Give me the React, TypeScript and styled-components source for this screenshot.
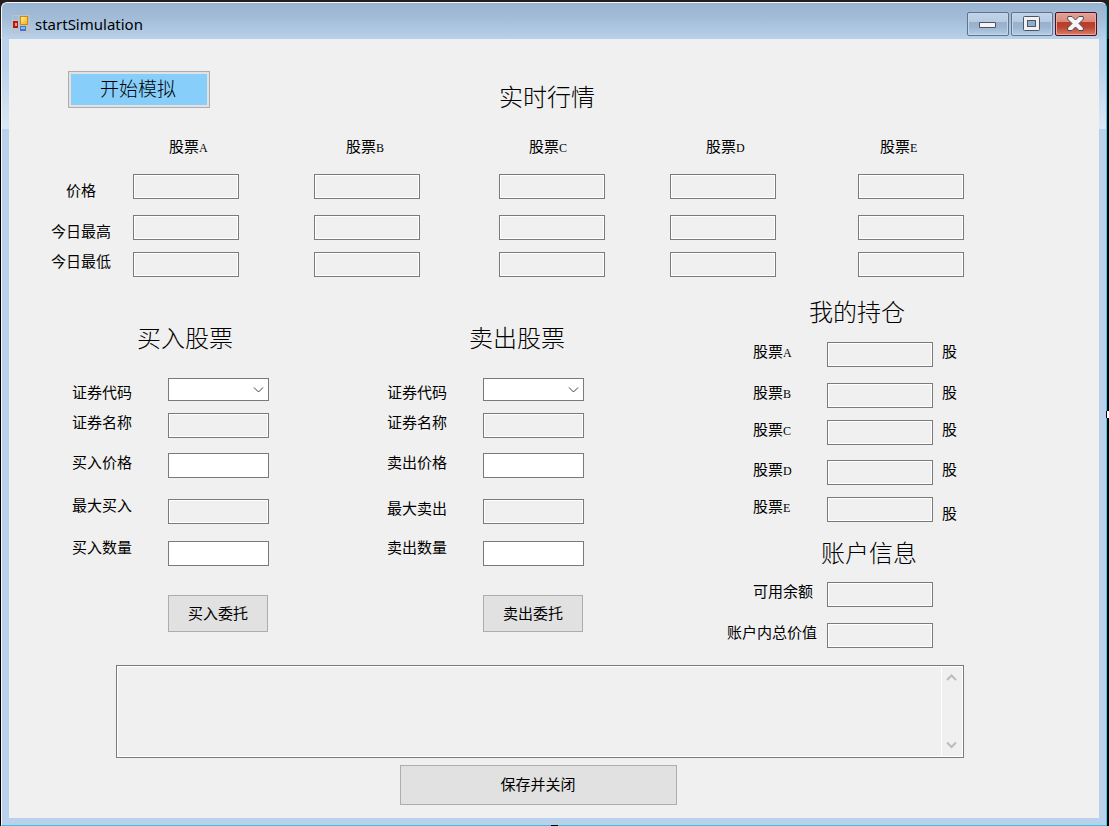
import React from "react";
import styled, { createGlobalStyle, css } from "styled-components";

const GlobalStyle = createGlobalStyle`
  * { box-sizing: border-box; }
  html { background: #0a0a0c; }
  body {
    margin: 0;
    color: #000;
    font-family: "Noto Sans CJK SC", sans-serif;
    font-size: 15px;
    font-weight: 400;
    line-height: 18px;
  }
  button, input, select, textarea { font: inherit; color: inherit; margin: 0; }
`;

const Desktop = styled.div`
  position: relative;
  min-height: 100vh;
  display: flex;
  padding: 2px 2px 0 1px;
  background: linear-gradient(#221e1f 0 39px, #000 39px);
`;

const Window = styled.div`
  flex: 1;
  min-width: 0;
  display: flex;
  flex-direction: column;
  padding: 0 7px 7px;
  border: 1px solid #f4f8fc;
  border-right-color: #35cdee;
  border-bottom-color: #35c4dc;
  border-radius: 6px 6px 0 0;
  background:
    linear-gradient(#99b4d1, #a3bdd9 16px, #b9d1ea 36px, #b9d1ea 60px, #dae8f6 126px, #b9d1ea 126px);
`;

const TitleBar = styled.header`
  height: 36px;
  flex: none;
  display: flex;
  align-items: center;
  gap: 5px;
  padding: 6px 2px 0 3px;
`;

const Caption = styled.h1`
  flex: 1;
  margin: 0;
  font: 400 15px/20px "Noto Sans", sans-serif;
`;

const WindowButtons = styled.div`
  display: flex;
  gap: 2px;
`;

const WindowButton = styled.button<{ $close?: boolean }>`
  width: 42px;
  height: 24px;
  padding: 0 2px 0 0;
  display: grid;
  place-items: center;
  border: 1px solid ${(p) => (p.$close ? "#4a1020" : "#60728c")};
  border-radius: 2px;
  box-shadow: inset 0 0 0 1px ${(p) => (p.$close ? "#e9a99d" : "#c4d6ea")};
  background: ${(p) =>
    p.$close
      ? "linear-gradient(#e3a196, #d98a7c 40%, #b93c26 41%, #bb4530 65%, #d98069)"
      : "linear-gradient(#c1d3e8, #b6cbe2 40%, #98b0cc 41%, #9cb5d0 65%, #b5cde7)"};
`;

const Client = styled.main`
  flex: 1;
  padding: 32px 0 13px;
  background: #f0f0f0;
`;

const TopBar = styled.div`
  display: grid;
  grid-template-columns: 490fr 600fr;
  align-items: end;
`;

const Heading = styled.h2<{ $gap?: number; $indent?: number }>`
  margin: ${(p) => p.$gap || 0}px 0 0 ${(p) => p.$indent || 0}px;
  padding-bottom: 2px;
  font-size: 24px;
  font-weight: 300;
  line-height: 30px;
`;

const PushButton = styled.button`
  width: 100px;
  height: 37px;
  padding: 0 0 2px;
  border: 1px solid #adadad;
  background: #e1e1e1;
`;

const StartButton = styled(PushButton)`
  display: block;
  width: 142px;
  margin: 0 0 5px 59px;
  padding: 0 2px 3px 0;
  font-size: 19px;
  font-weight: 300;
  line-height: 24px;
  box-shadow: inset 0 0 0 2px #e1e1e1;
  background: #87cefa;
`;

const OrderButton = styled(PushButton)`
  display: block;
  margin: 29px 0 0 96px;
`;

const Latin = styled.span`
  font: 12px/12px "Liberation Serif", serif;
`;

const StockHeads = styled.div`
  display: grid;
  grid-template-columns: 177fr 183fr 177fr 174fr 219fr;
  margin-top: 24px;
  padding-left: 160px;
`;

const QuoteRow = styled.div<{ $gap: number }>`
  display: grid;
  grid-template-columns: 84px 181fr 185fr 171fr 188fr 241fr;
  height: 25px;
  margin-top: ${(p) => p.$gap}px;
  padding-left: 40px;
`;

const QuoteLabel = styled.span<{ $align: "start" | "end" }>`
  align-self: ${(p) => p.$align};
  justify-self: center;
  padding-right: 20px;
  white-space: nowrap;
`;

const fieldBox = css`
  width: 100%;
  height: 25px;
  padding: 1px 4px;
  border: 1px solid #7a7a7a;
  border-radius: 0;
  background: #fff;
  outline: none;
`;

const Field = styled.input<{ $wide?: boolean }>`
  ${fieldBox}
  width: ${(p) => (p.$wide ? 106 : 101)}px;
  &:read-only {
    background: #f0f0f0;
    box-shadow: inset 0 0 0 1px #fff;
  }
`;

const Panels = styled.div`
  display: grid;
  grid-template-columns: 315fr 340fr 372fr;
  padding-left: 63px;
`;

const FormRow = styled.div<{ $gap: number; $height: number; $labelWidth: number }>`
  display: grid;
  grid-template-columns: ${(p) => p.$labelWidth}px auto 1fr;
  height: ${(p) => p.$height}px;
  margin-top: ${(p) => p.$gap}px;
`;

const Cell = styled.div<{ $align: "start" | "end" }>`
  align-self: ${(p) => p.$align};
  display: flex;
`;

const FormLabel = styled.label<{ $align?: "start" | "end"; $indent?: number }>`
  align-self: ${(p) => p.$align || "start"};
  padding-left: ${(p) => p.$indent || 0}px;
  white-space: nowrap;
`;

const Unit = styled.span<{ $align: "start" | "end" }>`
  align-self: ${(p) => p.$align};
  padding-left: 9px;
`;

const SelectWrap = styled.div`
  position: relative;
  width: 101px;
  svg {
    position: absolute;
    right: 5px;
    top: 8px;
    pointer-events: none;
  }
`;

const CodeSelect = styled.select`
  ${fieldBox}
  display: block;
  height: 23px;
  appearance: none;
`;

const Footer = styled.div`
  display: flex;
  flex-direction: column;
  align-items: center;
  gap: 7px;
  margin: 17px 135px 0 107px;
`;

const LogBox = styled.div`
  display: flex;
  width: 100%;
  height: 93px;
  border: 1px solid #7a7a7a;
  box-shadow: inset 0 0 0 1px #fff;
`;

const LogText = styled.textarea`
  flex: 1;
  min-width: 0;
  padding: 4px;
  border: 0;
  outline: none;
  resize: none;
  background: none;
`;

const ScrollTrack = styled.div`
  width: 22px;
  display: flex;
  flex-direction: column;
  justify-content: space-between;
  align-items: center;
  padding: 8px 2px 8px 0;
  border-left: 1px solid #fff;
`;

const SaveButton = styled(PushButton)`
  width: 277px;
  height: 40px;
  margin-right: 4px;
`;

const SideHandle = styled.i`
  position: absolute;
  right: 0;
  top: calc(50% - 2px);
  width: 3px;
  height: 7px;
  background: #fff;
  border-left: 1px solid #000;
`;

const BottomHandle = styled.i`
  position: absolute;
  left: calc(50% - 4px);
  bottom: 0;
  width: 7px;
  height: 1px;
  background: #000;
`;

const AppIcon = () => (
  <svg width="18" height="18" viewBox="0 0 18 18" aria-hidden="true">
    <defs>
      <linearGradient id="gold" x2="1" y2="1">
        <stop offset="0" stopColor="#fff1a0" />
        <stop offset="1" stopColor="#f3ae16" />
      </linearGradient>
    </defs>
    <path d="M.5 .5h17v17H.5zM.5 5.500h6M6.500 .5v17M.5 13.500h6M7 10.500h10.500" fill="none" stroke="#c0c2c4" />
    <path d="M15 10h2v7h-2zM7 16h10v1H7z" fill="#c0c2c4" />
    <rect x="8.500" y="1.500" width="7" height="8" fill="url(#gold)" stroke="#c98d0c" />
    <rect x="1" y="6" width="5" height="7" fill="#b51a0c" />
    <rect x="3" y="8" width="2" height="3" fill="#f0a08c" />
    <rect x="8" y="11" width="6" height="5" fill="#3d74d6" />
    <rect x="9" y="12" width="4" height="2" fill="#8db8f5" />
  </svg>
);

const Minimize = () => (
  <svg width="18" height="8" viewBox="0 0 18 8" aria-hidden="true">
    <rect x="1" y="2" width="17" height="6" rx="1" fill="#4b5366" />
    <rect x="2" y="3" width="15" height="4" fill="#f4f4f4" />
  </svg>
);

const Maximize = () => (
  <svg width="18" height="16" viewBox="0 0 18 16" aria-hidden="true">
    <rect x="1.500" y=".5" width="16" height="14" rx="1" fill="#f1f1f1" stroke="#4b5366" />
    <rect x="5.500" y="4.500" width="8" height="6" fill="#8faecf" stroke="#4b5366" />
  </svg>
);

const Close = () => (
  <svg width="18" height="16" viewBox="0 0 18 16" aria-hidden="true">
    <path
      d="M2 .5h4l3.500 3.500L13 .5h4L17.500 3 13 7.500l4.500 4.500-.5 2.500h-4L9.500 11 6 14.500H2L1.500 12 6 7.500 1.500 3z"
      fill="#f6f6f6"
      stroke="#4b4656"
      strokeLinejoin="round"
    />
  </svg>
);

const Chevron = ({ up, soft }: { up?: boolean; soft?: boolean }) => (
  <svg width="11" height="8" viewBox="0 0 11 8" aria-hidden="true">
    <path
      d={up ? "M1 6 5.500 1.500 10 6" : "M1 1.500 5.500 6 10 1.500"}
      fill="none"
      stroke={soft ? "#bcbcbc" : "#444"}
      strokeWidth={soft ? 2 : 1}
    />
  </svg>
);

const STOCKS = ["A", "B", "C", "D", "E"];

const Stock = ({ code }: { code: string }) => (
  <>
    股票<Latin>{code}</Latin>
  </>
);

type Align = "start" | "end";
type RowSpec = { label: string; gap: number; height: number; align: Align; kind?: "select" | "edit" };

const QUOTES: { label: string; gap: number; align: Align }[] = [
  { label: "价格", gap: 19, align: "end" },
  { label: "今日最高", gap: 16, align: "end" },
  { label: "今日最低", gap: 12, align: "start" },
];

const BUY: RowSpec[] = [
  { label: "证券代码", gap: 24, height: 23, align: "end", kind: "select" },
  { label: "证券名称", gap: 12, height: 25, align: "start" },
  { label: "买入价格", gap: 15, height: 25, align: "start", kind: "edit" },
  { label: "最大买入", gap: 18, height: 28, align: "start" },
  { label: "买入数量", gap: 14, height: 28, align: "start", kind: "edit" },
];

const SELL: RowSpec[] = [
  { label: "证券代码", gap: 24, height: 23, align: "end", kind: "select" },
  { label: "证券名称", gap: 12, height: 25, align: "start" },
  { label: "卖出价格", gap: 15, height: 25, align: "start", kind: "edit" },
  { label: "最大卖出", gap: 21, height: 25, align: "start" },
  { label: "卖出数量", gap: 14, height: 28, align: "start", kind: "edit" },
];

const HOLDINGS: { code: string; gap: number; unit: Align }[] = [
  { code: "A", gap: 14, unit: "start" },
  { code: "B", gap: 16, unit: "start" },
  { code: "C", gap: 12, unit: "start" },
  { code: "D", gap: 15, unit: "start" },
  { code: "E", gap: 12, unit: "end" },
];

const OrderForm = (props: { id: string; title: string; indent: number; rows: RowSpec[]; action: string }) => (
  <section>
    <Heading $gap={45} $indent={props.indent}>{props.title}</Heading>
    {props.rows.map((row, i) => {
      const id = `${props.id}-${i}`;
      return (
        <FormRow key={id} $gap={row.gap} $height={row.height} $labelWidth={96}>
          <FormLabel htmlFor={id} $align={row.align}>{row.label}</FormLabel>
          <Cell $align="end">
            {row.kind === "select" ? (
              <SelectWrap>
                <CodeSelect id={id} defaultValue="">
                  <option value="" />
                </CodeSelect>
                <Chevron />
              </SelectWrap>
            ) : (
              <Field id={id} readOnly={row.kind !== "edit"} />
            )}
          </Cell>
        </FormRow>
      );
    })}
    <OrderButton type="button">{props.action}</OrderButton>
  </section>
);

export default function App() {
  return (
    <>
      <GlobalStyle />
      <Desktop>
        <Window>
          <TitleBar>
            <AppIcon />
            <Caption>startSimulation</Caption>
            <WindowButtons>
              <WindowButton type="button" aria-label="最小化"><Minimize /></WindowButton>
              <WindowButton type="button" aria-label="最大化"><Maximize /></WindowButton>
              <WindowButton type="button" aria-label="关闭" $close><Close /></WindowButton>
            </WindowButtons>
          </TitleBar>
          <Client>
            <TopBar>
              <StartButton type="button">开始模拟</StartButton>
              <Heading>实时行情</Heading>
            </TopBar>
            <StockHeads>
              {STOCKS.map((code) => (
                <span key={code}><Stock code={code} /></span>
              ))}
            </StockHeads>
            {QUOTES.map((row) => (
              <QuoteRow key={row.label} $gap={row.gap}>
                <QuoteLabel $align={row.align}>{row.label}</QuoteLabel>
                {STOCKS.map((code) => (
                  <Field key={code} $wide readOnly aria-label={`股票${code} ${row.label}`} />
                ))}
              </QuoteRow>
            ))}
            <Panels>
              <OrderForm id="buy" title="买入股票" indent={65} rows={BUY} action="买入委托" />
              <OrderForm id="sell" title="卖出股票" indent={82} rows={SELL} action="卖出委托" />
              <section>
                <Heading $gap={19} $indent={82}>我的持仓</Heading>
                {HOLDINGS.map((h) => (
                  <FormRow key={h.code} $gap={h.gap} $height={25} $labelWidth={100}>
                    <FormLabel htmlFor={`hold-${h.code}`} $indent={26}><Stock code={h.code} /></FormLabel>
                    <Field id={`hold-${h.code}`} $wide readOnly />
                    <Unit $align={h.unit}>股</Unit>
                  </FormRow>
                ))}
                <Heading $gap={15} $indent={94}>账户信息</Heading>
                <FormRow $gap={13} $height={25} $labelWidth={100}>
                  <FormLabel htmlFor="balance" $indent={26}>可用余额</FormLabel>
                  <Field id="balance" $wide readOnly />
                </FormRow>
                <FormRow $gap={16} $height={25} $labelWidth={100}>
                  <FormLabel htmlFor="total">账户内总价值</FormLabel>
                  <Field id="total" $wide readOnly />
                </FormRow>
              </section>
            </Panels>
            <Footer>
              <LogBox>
                <LogText readOnly aria-label="交易记录" />
                <ScrollTrack>
                  <Chevron up soft />
                  <Chevron soft />
                </ScrollTrack>
              </LogBox>
              <SaveButton type="button">保存并关闭</SaveButton>
            </Footer>
          </Client>
        </Window>
        <SideHandle />
        <BottomHandle />
      </Desktop>
    </>
  );
}
